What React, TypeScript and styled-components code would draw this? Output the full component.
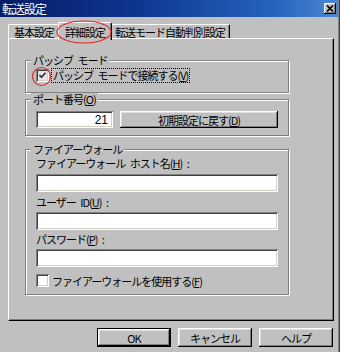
import styled, { createGlobalStyle } from 'styled-components';

const GlobalStyle = createGlobalStyle`
  html, body {
    margin: 0;
    padding: 0;
    background: #c0c0c0;
  }
  body {
    font-family: "Noto Sans CJK JP", "Liberation Sans", sans-serif;
  }
`;

const ScWindow = styled.div`
  position: relative;
  width: 340px;
  height: 352px;
  box-sizing: border-box;
  background: #c0c0c0;
  box-shadow: inset -1px 0 0 #404040, inset -2px 0 0 #808080;
  display: flex;
  flex-direction: column;
  font-size: 11px;
  line-height: 12px;
  letter-spacing: -1px;
  word-spacing: 3px;
  color: #000;
  overflow: hidden;
`;

const ScTitleBar = styled.div`
  height: 17px;
  margin-right: 2px;
  box-sizing: border-box;
  display: flex;
  align-items: center;
  justify-content: space-between;
  padding: 0 2px 0 2px;
  background-color: #0a2a84;
  background-image: linear-gradient(90deg, #061c66 0%, #0e3590 40%, #2462bd 80%, #4a86d4 100%);
  color: #fff;
  font-size: 12px;
`;

const ScCloseBtn = styled.div`
  width: 12px;
  height: 11px;
  box-sizing: border-box;
  background: #c0c0c0;
  box-shadow: inset -1px -1px 0 #000, inset 1px 1px 0 #fff, inset -2px -2px 0 #808080;
  display: flex;
  align-items: center;
  justify-content: center;
`;

const ScTabRow = styled.div`
  display: flex;
  align-items: flex-end;
  height: 16px;
  margin-top: 5px;
  padding-left: 8px;
  position: relative;
  z-index: 1;
`;

const ScTab = styled.div<{ $active?: boolean; $w: number }>`
  box-sizing: border-box;
  width: ${p => p.$active ? p.$w + 4 : p.$w}px;
  height: ${p => p.$active ? 18 : 14}px;
  margin: ${p => p.$active ? '0 -2px -2px' : '0'};
  position: relative;
  z-index: ${p => p.$active ? 2 : 1};
  background: #c0c0c0;
  border-left: 1px solid #fff;
  border-top: 1px solid #fff;
  border-right: 1px solid #000;
  border-radius: 2px 2px 0 0;
  box-shadow: inset -1px 0 0 #808080;
  display: flex;
  justify-content: center;
  padding-top: ${p => p.$active ? 3 : 1}px;
  white-space: nowrap;
`;

const ScPanel = styled.div`
  box-sizing: border-box;
  width: 326px;
  height: 283px;
  margin-left: 8px;
  border-left: 1px solid #fff;
  border-top: 1px solid #fff;
  border-right: 1px solid #000;
  border-bottom: 1px solid #000;
  box-shadow: inset -1px -1px 0 #808080;
  padding: 21px 0 0 16px;
  display: flex;
  flex-direction: column;
`;

const ScGroup = styled.div<{ $mt?: number; $pb: number }>`
  box-sizing: border-box;
  width: 264px;
  margin-top: ${p => p.$mt ?? 0}px;
  padding: 0 10px ${p => p.$pb}px;
  border: 1px solid #808080;
  box-shadow: inset 1px 1px 0 #fff, 1px 1px 0 #fff;
  display: flex;
  flex-direction: column;
`;

const ScLegend = styled.div`
  align-self: flex-start;
  margin: -7px 0 0 -5px;
  padding: 0 2px;
  height: 12px;
  background: #c0c0c0;
  white-space: nowrap;
`;

const ScCheckRow = styled.div<{ $mt: number }>`
  display: flex;
  align-items: center;
  gap: 3px;
  height: 13px;
  margin-top: ${p => p.$mt}px;
`;

const ScCheckBox = styled.div<{ $checked?: boolean }>`
  width: 13px;
  height: 13px;
  box-sizing: border-box;
  background: ${p => p.$checked ? '#e4e4e4' : '#fff'};
  box-shadow: inset 1px 1px 0 #808080, inset -1px -1px 0 #fff,
    inset 2px 2px 0 #404040, inset -2px -2px 0 #d4d0c8;
  display: flex;
  align-items: center;
  justify-content: center;
  flex-shrink: 0;
`;

const ScFocusLabel = styled.span`
  outline: 1px dotted #000;
  outline-offset: 0;
  padding: 0 1px;
  line-height: 13px;
`;

const ScRow = styled.div`
  display: flex;
  gap: 7px;
  margin-top: 6px;
`;

const ScInput = styled.div<{ $w?: number; $h: number; $mt?: number }>`
  box-sizing: border-box;
  width: ${p => p.$w ? `${p.$w}px` : '100%'};
  height: ${p => p.$h}px;
  margin-top: ${p => p.$mt ?? 0}px;
  background: #fff;
  box-shadow: inset 1px 1px 0 #808080, inset -1px -1px 0 #fff,
    inset 2px 2px 0 #404040, inset -2px -2px 0 #d4d0c8;
  display: flex;
  align-items: center;
  justify-content: flex-end;
  padding: 0 5px;
  font-family: "Liberation Sans", sans-serif;
  font-size: 12px;
  letter-spacing: 0;
`;

const ScButton = styled.div<{ $w: number; $h: number; $default?: boolean }>`
  box-sizing: border-box;
  width: ${p => p.$w}px;
  height: ${p => p.$h}px;
  background: #c0c0c0;
  border: ${p => p.$default ? '1px solid #000' : 'none'};
  box-shadow: inset -1px -1px 0 #000, inset 1px 1px 0 #fff,
    inset -2px -2px 0 #808080, inset 2px 2px 0 #dfdfdf;
  display: flex;
  align-items: center;
  justify-content: center;
  white-space: nowrap;
`;

const ScFieldLabel = styled.div<{ $mt: number }>`
  height: 12px;
  margin-top: ${p => p.$mt}px;
  white-space: nowrap;
`;

const ScFooter = styled.div`
  display: flex;
  justify-content: flex-end;
  gap: 7px;
  margin-top: 7px;
  padding-right: 7px;
`;

const ScMarks = styled.svg`
  position: absolute;
  left: 0;
  top: 0;
  pointer-events: none;
  z-index: 5;
`;

function Check() {
  return <svg width="9" height="9" viewBox="0 0 9 9">
    <polyline points="1.5,4 3.5,6.2 7.5,1.8" fill="none" stroke="#303030" strokeWidth="1.7" />
  </svg>;
}

export default function App() {
  return <>
    <GlobalStyle />
    <ScWindow>
      <ScTitleBar>
        <span>転送設定</span>
        <ScCloseBtn>
          <svg width="8" height="7" viewBox="0 0 8 7">
            <path d="M1 0.5 L7 6.5 M7 0.5 L1 6.5" stroke="#000" strokeWidth="1.6" />
          </svg>
        </ScCloseBtn>
      </ScTitleBar>

      <ScTabRow>
        <ScTab $w={52}>基本設定</ScTab>
        <ScTab $w={50} $active>詳細設定</ScTab>
        <ScTab $w={120}>転送モード自動判別設定</ScTab>
      </ScTabRow>

      <ScPanel>
        <ScGroup $pb={10}>
          <ScLegend>パッシブ モード</ScLegend>
          <ScCheckRow $mt={3}>
            <ScCheckBox $checked><Check /></ScCheckBox>
            <ScFocusLabel>パッシブ モードで接続する(<u>V</u>)</ScFocusLabel>
          </ScCheckRow>
        </ScGroup>

        <ScGroup $mt={6} $pb={7}>
          <ScLegend>ポート番号(<u>O</u>)</ScLegend>
          <ScRow>
            <ScInput $w={77} $h={17}>21</ScInput>
            <ScButton $w={158} $h={17}>初期設定に戻す(<u>D</u>)</ScButton>
          </ScRow>
        </ScGroup>

        <ScGroup $mt={13} $pb={7}>
          <ScLegend>ファイアーウォール</ScLegend>
          <ScFieldLabel $mt={2}>ファイアーウォール ホスト名(<u>H</u>) :</ScFieldLabel>
          <ScInput $h={18} $mt={5} />
          <ScFieldLabel $mt={4}>ユーザー ID(<u>U</u>) :</ScFieldLabel>
          <ScInput $h={18} $mt={4} />
          <ScFieldLabel $mt={3}>パスワード(<u>P</u>) :</ScFieldLabel>
          <ScInput $h={18} $mt={4} />
          <ScCheckRow $mt={7}>
            <ScCheckBox />
            <span>ファイアーウォールを使用する(<u>F</u>)</span>
          </ScCheckRow>
        </ScGroup>
      </ScPanel>

      <ScFooter>
        <ScButton $w={74} $h={19} $default>OK</ScButton>
        <ScButton $w={74} $h={19}>キャンセル</ScButton>
        <ScButton $w={74} $h={19}>ヘルプ</ScButton>
      </ScFooter>

      <ScMarks width="340" height="352" viewBox="0 0 340 352">
        <ellipse cx="84" cy="32" rx="27" ry="11" fill="none" stroke="#e02828" strokeWidth="1.2" />
        <circle cx="41.5" cy="76.5" r="9" fill="none" stroke="#e02828" strokeWidth="1.2" />
      </ScMarks>
    </ScWindow>
  </>;
}
